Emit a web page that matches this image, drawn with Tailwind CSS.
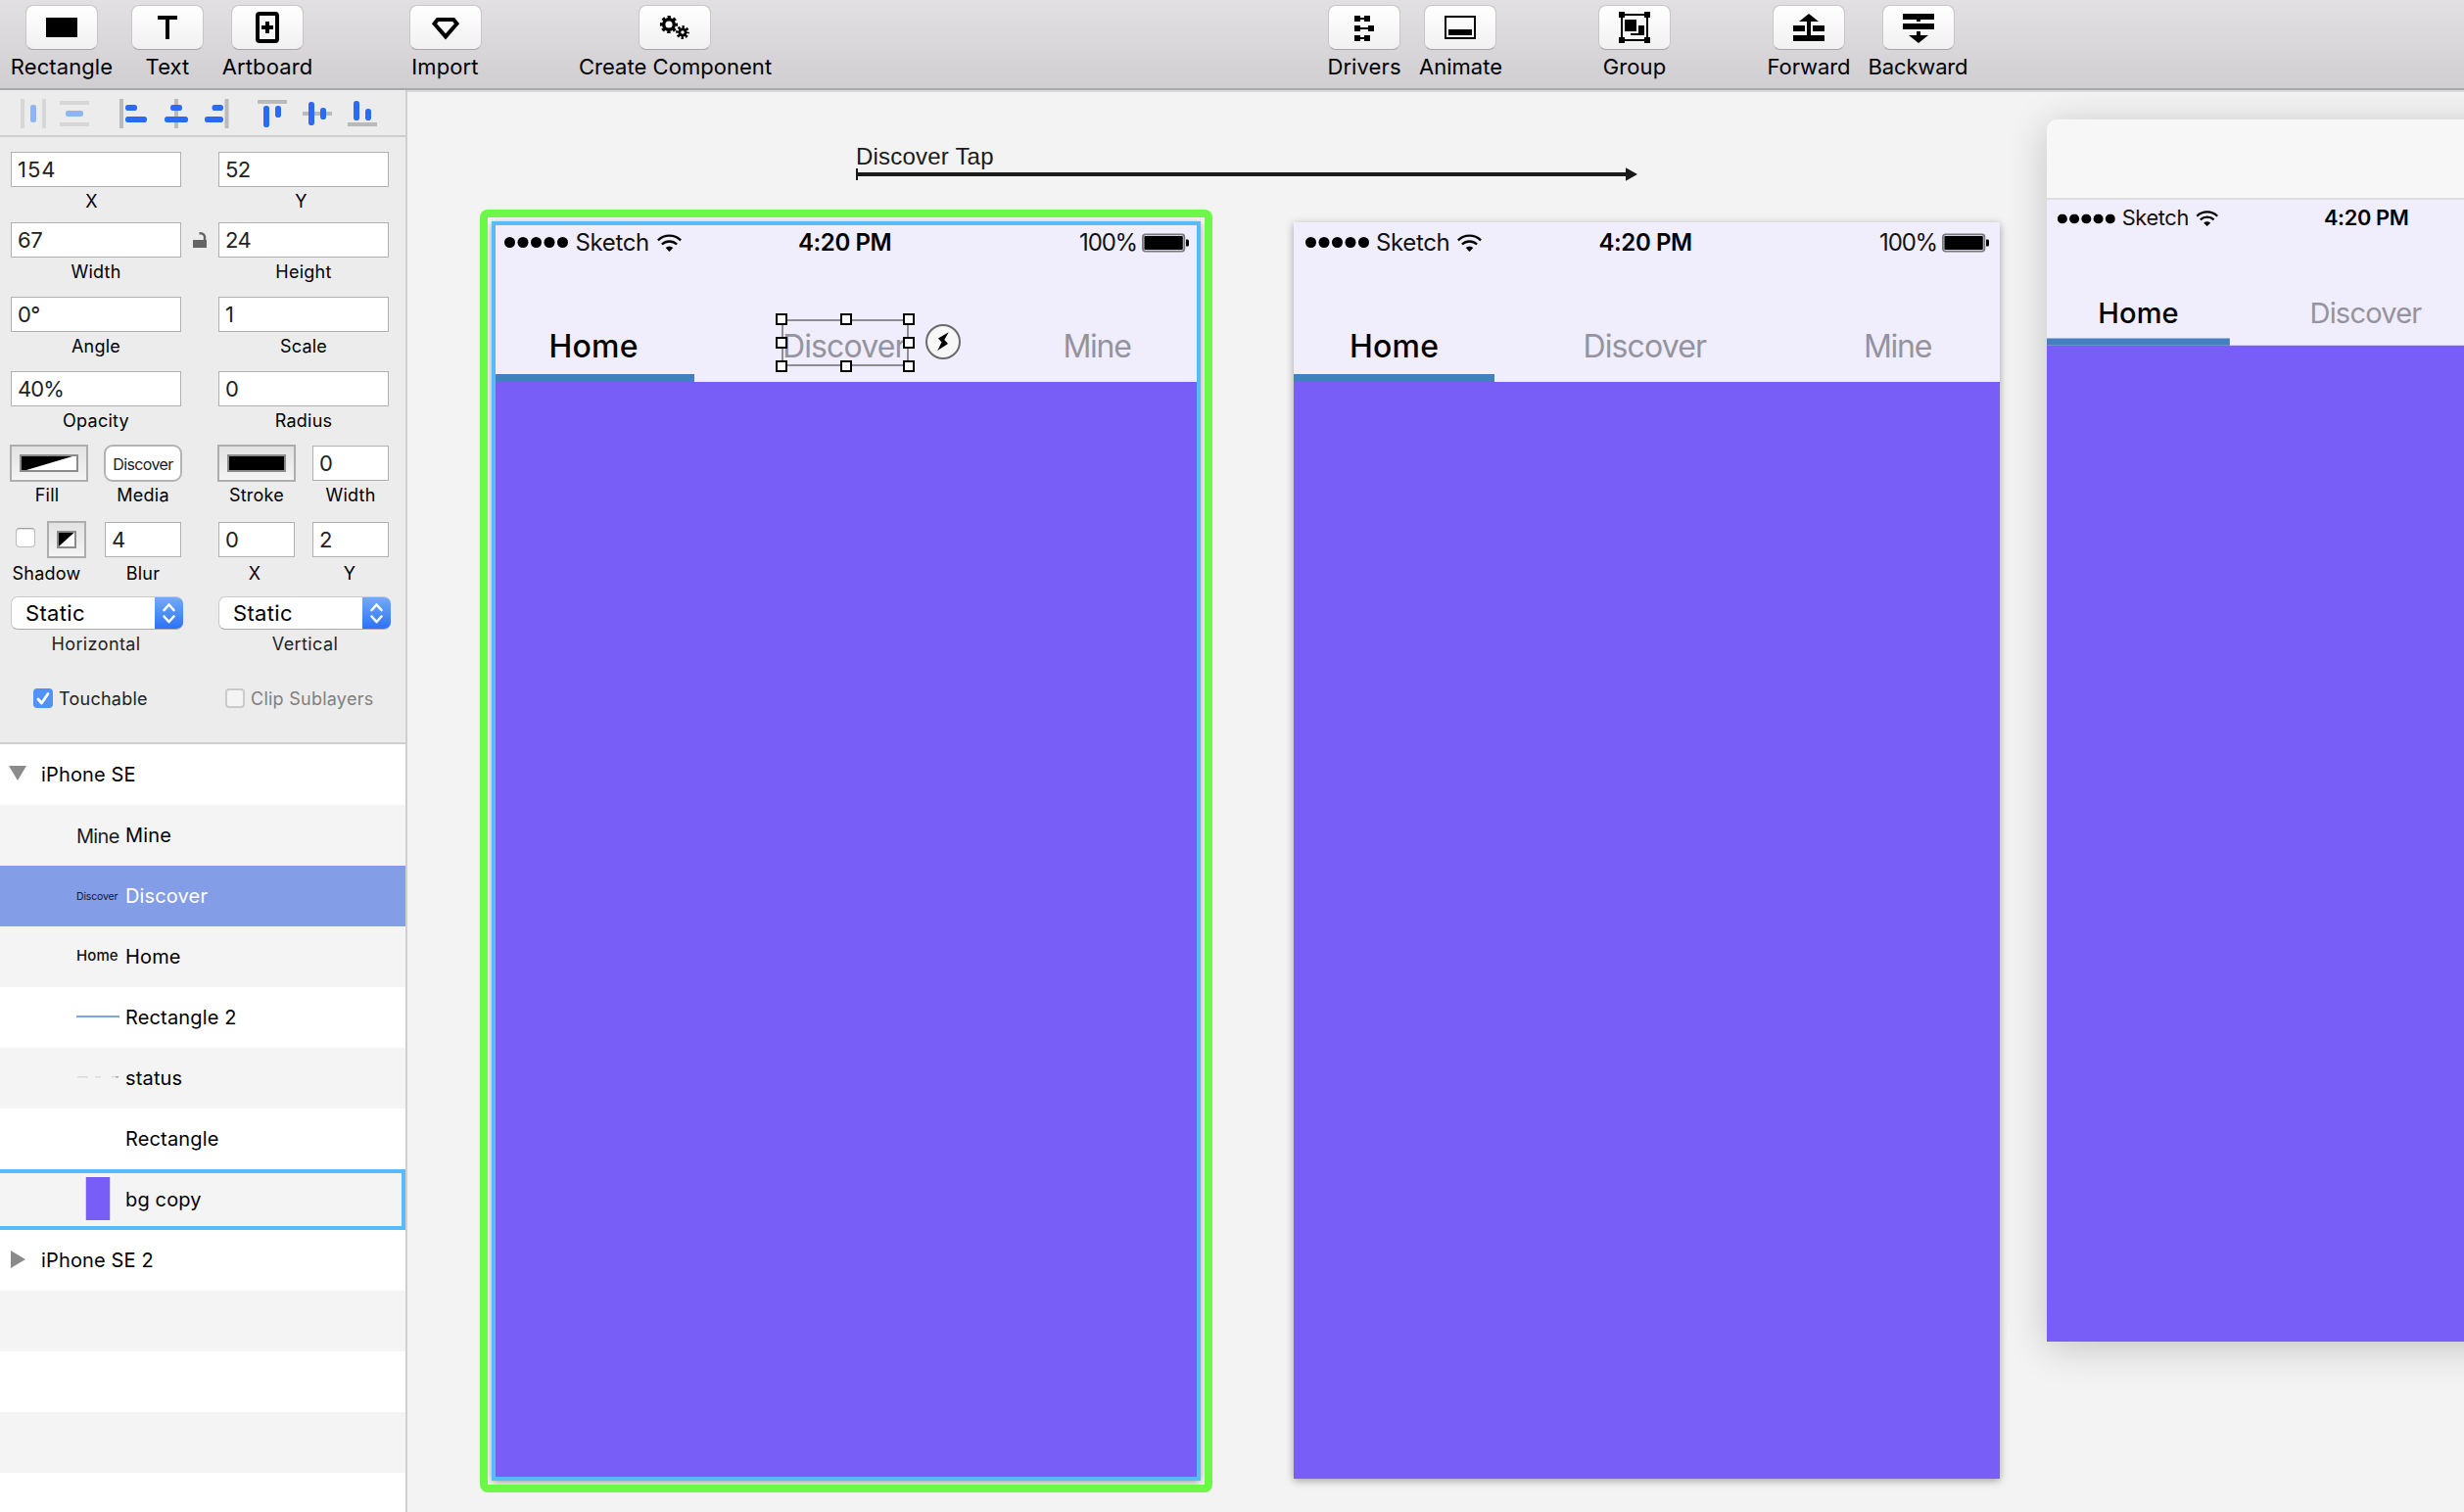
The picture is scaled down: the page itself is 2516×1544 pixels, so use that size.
<!DOCTYPE html>
<html lang="en">
<head>
<meta charset="utf-8">
<title>Design editor</title>
<script src="https://cdn.jsdelivr.net/npm/@tailwindcss/browser@4"></script>
</head>
<body class="w-[2516px] h-[1544px] overflow-hidden bg-[#f3f3f3] font-['Inter',sans-serif] text-black">

<!-- Toolbar -->
<header class="h-[92px] flex items-start pt-[5px] pl-[26px] bg-linear-to-b from-[#e2e0e3] to-[#d0ced1] border-b-2 border-[#a9a8aa] text-[22px] leading-7 tracking-[0.1px] whitespace-nowrap">
  <div class="w-[74px] flex flex-col items-center">
    <div class="w-[74px] h-[46px] rounded-lg border border-[#c6c5c7] border-b-[#a5a4a6] bg-linear-to-b from-white to-[#f1f1f1]"><svg class="-m-px w-[74px] h-[45px]" viewBox="26 5 74 45"><path d="M47 18h32v20H47z"/></svg></div>
    <span class="mt-[3px]">Rectangle</span>
  </div>
  <div class="ml-[34px] w-[74px] flex flex-col items-center">
    <div class="w-[74px] h-[46px] rounded-lg border border-[#c6c5c7] border-b-[#a5a4a6] bg-linear-to-b from-white to-[#f1f1f1]"><svg class="-m-px w-[74px] h-[45px]" viewBox="134 5 74 45"><path d="M161 16h20v4h-8v20h-4V20h-8z"/></svg></div>
    <span class="mt-[3px]">Text</span>
  </div>
  <div class="ml-[28px] w-[74px] flex flex-col items-center">
    <div class="w-[74px] h-[46px] rounded-lg border border-[#c6c5c7] border-b-[#a5a4a6] bg-linear-to-b from-white to-[#f1f1f1]"><svg class="-m-px w-[74px] h-[45px]" viewBox="236 5 74 45"><rect x="263" y="14" width="20" height="28" rx="2" fill="none" stroke="#000" stroke-width="4"/><path d="M271 22h4v4h4v4h-4v4h-4v-4h-4v-4h4z"/></svg></div>
    <span class="mt-[3px]">Artboard</span>
  </div>
  <div class="ml-[108px] w-[74px] flex flex-col items-center">
    <div class="w-[74px] h-[46px] rounded-lg border border-[#c6c5c7] border-b-[#a5a4a6] bg-linear-to-b from-white to-[#f1f1f1]"><svg class="-m-px w-[74px] h-[45px]" viewBox="418 5 74 45"><path d="M446.8 20h16.400l3.300 4.200L455 37.400 443.500 24.200z" fill="none" stroke="#000" stroke-width="4"/></svg></div>
    <span class="mt-[3px] pr-px">Import</span>
  </div>
  <div class="ml-[160px] w-[74px] flex flex-col items-center">
    <div class="w-[74px] h-[46px] rounded-lg border border-[#c6c5c7] border-b-[#a5a4a6] bg-linear-to-b from-white to-[#f1f1f1]"><svg class="-m-px w-[74px] h-[45px]" viewBox="652 5 74 45" fill="none" stroke="#000"><circle cx="683" cy="25" r="5.300" stroke-width="3.400"/><circle cx="683" cy="25" r="7.700" stroke-width="2.800" stroke-dasharray="3.300 2.747" stroke-dashoffset="1.650"/><circle cx="697" cy="33" r="3.200" stroke-width="2.800"/><circle cx="697" cy="33" r="5.400" stroke-width="3" stroke-dasharray="2.300 1.941" stroke-dashoffset="1.150"/></svg></div>
    <span class="mt-[3px] pl-px tracking-[0.040px]">Create Component</span>
  </div>
  <div class="ml-[630px] w-[74px] flex flex-col items-center">
    <div class="w-[74px] h-[46px] rounded-lg border border-[#c6c5c7] border-b-[#a5a4a6] bg-linear-to-b from-white to-[#f1f1f1]"><svg class="-m-px w-[74px] h-[45px]" viewBox="1356 5 74 45"><path d="M1383 16h6v2h4v-2h6v6h-6v-2h-4v2h-6zM1383 26h6v2h8v-2h6v6h-6v-2h-8v2h-6zM1383 36h6v2h4v-2h6v6h-6v-2h-4v2h-6z"/></svg></div>
    <span class="mt-[3px]">Drivers</span>
  </div>
  <div class="ml-[24px] w-[74px] flex flex-col items-center">
    <div class="w-[74px] h-[46px] rounded-lg border border-[#c6c5c7] border-b-[#a5a4a6] bg-linear-to-b from-white to-[#f1f1f1]"><svg class="-m-px w-[74px] h-[45px]" viewBox="1454 5 74 45"><path d="M1476 17h30v22h-30z" fill="none" stroke="#000" stroke-width="2"/><path d="M1479 30h24v6h-24z"/></svg></div>
    <span class="mt-[3px] pl-px tracking-[0px]">Animate</span>
  </div>
  <div class="ml-[104px] w-[74px] flex flex-col items-center">
    <div class="w-[74px] h-[46px] rounded-lg border border-[#c6c5c7] border-b-[#a5a4a6] bg-linear-to-b from-white to-[#f1f1f1]"><svg class="-m-px w-[74px] h-[45px]" viewBox="1632 5 74 45"><path d="M1656 15h26v26h-26z" fill="none" stroke="#000" stroke-width="2"/><path d="M1653 12h6v6h-6zM1679 12h6v6h-6zM1653 38h6v6h-6zM1679 38h6v6h-6zM1659 20h12v12h-12zM1673 26h6v10h-14v-2h8z"/></svg></div>
    <span class="mt-[3px]">Group</span>
  </div>
  <div class="ml-[104px] w-[74px] flex flex-col items-center">
    <div class="w-[74px] h-[46px] rounded-lg border border-[#c6c5c7] border-b-[#a5a4a6] bg-linear-to-b from-white to-[#f1f1f1]"><svg class="-m-px w-[74px] h-[45px]" viewBox="1810 5 74 45"><path d="M1847 14l10 8h-8v14h14v6h-32v-6h14V22h-8zM1831 26h12v6h-12zM1851 26h12v6h-12z"/></svg></div>
    <span class="mt-[3px] tracking-[-0.1px]">Forward</span>
  </div>
  <div class="ml-[38px] w-[74px] flex flex-col items-center">
    <div class="w-[74px] h-[46px] rounded-lg border border-[#c6c5c7] border-b-[#a5a4a6] bg-linear-to-b from-white to-[#f1f1f1]"><svg class="-m-px w-[74px] h-[45px]" viewBox="1922 5 74 45"><path d="M1943 14h32v6h-14v2h-4v-2h-14zM1943 24h32v6h-32zM1957 32h4v4h8l-10 8-10-8h8z"/></svg></div>
    <span class="mt-[3px] pr-px tracking-[-0.170px]">Backward</span>
  </div>
</header>

<div class="flex h-[1452px]">
  <!-- Sidebar -->
  <aside class="w-[416px] shrink-0 border-r-2 border-[#d0d0d0] bg-[#ececec]">
    <div class="h-[48px] border-b-2 border-[#cfcfcf]">
      <svg class="w-[414px] h-[46px]" viewBox="0 92 414 46">
        <path fill="#d7d7d7" d="M21 101h4v30h-4zM43 101h4v30h-4zM61 103h30v4H61zM61 125h30v4H61z"/>
        <g fill="#8db5f1"><rect x="31" y="107" width="6" height="18" rx="2.500"/><rect x="67" y="113" width="18" height="6" rx="2.500"/></g>
        <path fill="#bababa" d="M122 101h4v30h-4zM178 101h4v30h-4zM229.500 101h4v30h-4zM263 102h30v4h-30zM309 114h30v4h-30zM355 125h30v4h-30z"/>
        <g fill="#2a6af5">
          <rect x="128" y="107" width="12" height="6" rx="2.800"/><rect x="128" y="119" width="22" height="6" rx="2.800"/>
          <rect x="174" y="107" width="12" height="6" rx="2.800"/><rect x="168" y="119" width="24" height="6" rx="2.800"/>
          <rect x="216.500" y="107" width="11.500" height="6" rx="2.800"/><rect x="209" y="119" width="19" height="6" rx="2.800"/>
          <rect x="269" y="108" width="6" height="22" rx="2.800"/><rect x="281" y="108" width="6" height="12" rx="2.800"/>
          <rect x="315" y="104" width="6" height="24" rx="2.800"/><rect x="327" y="110" width="6" height="12" rx="2.800"/>
          <rect x="361" y="103" width="6" height="20" rx="2.800"/><rect x="373" y="111" width="6" height="12" rx="2.800"/>
        </g>
      </svg>
    </div>

    <div class="h-[620px] pt-[15px] pl-[11px] border-b-2 border-[#cfcfcf] text-[18px] leading-6 tracking-[0.25px] text-center whitespace-nowrap">
      <div class="h-[72px] flex gap-[38px]">
        <div class="w-[174px]"><div class="h-9 pl-1.5 border border-[#b0b0b0] bg-white text-left text-[22px] leading-[35px] text-[#222] tracking-[1px]">154</div><div class="mt-[3px] pr-[9px]">X</div></div>
        <div class="w-[174px]"><div class="h-9 pl-1.5 border border-[#b0b0b0] bg-white text-left text-[22px] leading-[35px] text-[#222] tracking-[-0.5px]">52</div><div class="mt-[3px] pr-[5px]">Y</div></div>
      </div>
      <div class="h-[76px] flex">
        <div class="w-[174px]"><div class="h-9 pl-1.5 border border-[#b0b0b0] bg-white text-left text-[22px] leading-[35px] text-[#222] tracking-[-0.5px]">67</div><div class="mt-[3px]">Width</div></div>
        <svg class="w-[38px] h-9" viewBox="185 227 38 36"><path d="M197 245h14v8h-14z" fill="#646464"/><path d="M203.500 238.300h1.500a4 4 0 0 1 4 4v3" fill="none" stroke="#646464" stroke-width="2.400"/></svg>
        <div class="w-[174px]"><div class="h-9 pl-1.5 border border-[#b0b0b0] bg-white text-left text-[22px] leading-[35px] text-[#222] tracking-[-0.5px]">24</div><div class="mt-[3px]">Height</div></div>
      </div>
      <div class="h-[76px] flex gap-[38px]">
        <div class="w-[174px]"><div class="h-9 pl-1.5 border border-[#b0b0b0] bg-white text-left text-[22px] leading-[35px] text-[#222] tracking-[-0.7px]">0°</div><div class="mt-[3px]">Angle</div></div>
        <div class="w-[174px]"><div class="h-9 pl-1.5 border border-[#b0b0b0] bg-white text-left text-[22px] leading-[35px] text-[#222]">1</div><div class="mt-[3px]">Scale</div></div>
      </div>
      <div class="h-[76px] flex gap-[38px]">
        <div class="w-[174px]"><div class="h-9 pl-1.5 border border-[#b0b0b0] bg-white text-left text-[22px] leading-[35px] text-[#222] tracking-[-0.9px]">40%</div><div class="mt-[3px]">Opacity</div></div>
        <div class="w-[174px]"><div class="h-9 pl-1.5 border border-[#b0b0b0] bg-white text-left text-[22px] leading-[35px] text-[#222]">0</div><div class="mt-[3px]">Radius</div></div>
      </div>
      <div class="h-[78px] flex">
        <div class="w-[78px]">
          <div class="-mx-px -mt-px w-20 h-[38px] border-2 border-[#adadad] bg-linear-to-b from-[#e2e2e2] to-[#f4f4f4] flex items-center justify-center"><svg class="w-[60px] h-[18px] border-2 border-[#8c8c8c] bg-white" viewBox="0 0 56 14"><path d="M0 0h52L5 14H0z"/></svg></div>
          <div class="mt-0.5 pr-1">Fill</div>
        </div>
        <div class="ml-[18px] w-[78px]">
          <div class="-mx-px -mt-px w-20 h-[38px] border-2 border-[#b3b3b3] rounded-[9px] bg-white text-[16px] leading-[37px] tracking-[-0.6px] text-[#1a1a1a]">Discover</div>
          <div class="mt-0.5">Media</div>
        </div>
        <div class="ml-[38px] w-[78px]">
          <div class="-mx-px -mt-px w-20 h-[38px] border-2 border-[#adadad] bg-linear-to-b from-[#e2e2e2] to-[#f4f4f4] flex items-center justify-center"><div class="w-[60px] h-[18px] border-2 border-[#8c8c8c] bg-black"></div></div>
          <div class="mt-0.5">Stroke</div>
        </div>
        <div class="ml-[18px] w-[78px]"><div class="h-9 pl-1.5 border border-[#b0b0b0] bg-white text-left text-[22px] leading-[35px] text-[#222]">0</div><div class="mt-[3px]">Width</div></div>
      </div>
      <div class="h-[76px] flex">
        <div class="w-[78px]">
          <div class="-mt-px h-[38px] flex pl-[5px]">
            <div class="mt-[7px] w-5 h-5 rounded-[4px] border border-[#bcbcbc] border-t-[#a0a0a0] bg-white shadow-[inset_0_1px_1px_rgba(0,0,0,0.15)]"></div>
            <div class="ml-3 w-10 h-[38px] border-2 border-[#adadad] bg-linear-to-b from-[#e2e2e2] to-[#f4f4f4] flex items-center justify-center"><svg class="w-5 h-[18px] border-2 border-[#8c8c8c] bg-white" viewBox="0 0 16 14"><path d="M0 0h15.500L0 14z"/></svg></div>
          </div>
          <div class="mt-1 pr-[5px]">Shadow</div>
        </div>
        <div class="ml-[18px] w-[78px]"><div class="h-9 pl-1.5 border border-[#b0b0b0] bg-white text-left text-[22px] leading-[35px] text-[#222]">4</div><div class="mt-[5px]">Blur</div></div>
        <div class="ml-[38px] w-[78px]"><div class="h-9 pl-1.5 border border-[#b0b0b0] bg-white text-left text-[22px] leading-[35px] text-[#222]">0</div><div class="mt-[5px] pr-1">X</div></div>
        <div class="ml-[18px] w-[78px]"><div class="h-9 pl-1.5 border border-[#b0b0b0] bg-white text-left text-[22px] leading-[35px] text-[#222]">2</div><div class="mt-[5px] pr-0.5">Y</div></div>
      </div>
      <div class="h-[94px] flex gap-9 text-[#222]">
        <div class="w-[176px]">
          <div class="h-[34px] flex justify-between rounded-[7px] overflow-hidden bg-white border border-[#c9c9c9] border-b-[#a9a9a9] border-r-0">
            <span class="pl-[14px] text-[22px] leading-[33px] tracking-[0.34px] text-black">Static</span>
            <svg class="-my-px w-[29px] h-[34px] bg-linear-to-b from-[#74acf5] to-[#2a6ff6]" viewBox="0 0 29 34" fill="none" stroke="#fff" stroke-width="2.600" stroke-linecap="round" stroke-linejoin="round"><path d="M9.500 14l5-5.500 5 5.500M9.500 20.500l5 5.500 5-5.500"/></svg>
          </div>
          <div class="mt-[3px] pr-0.5 tracking-[0.4px]">Horizontal</div>
        </div>
        <div class="w-[176px]">
          <div class="h-[34px] flex justify-between rounded-[7px] overflow-hidden bg-white border border-[#c9c9c9] border-b-[#a9a9a9] border-r-0">
            <span class="pl-[14px] text-[22px] leading-[33px] tracking-[0.34px] text-black">Static</span>
            <svg class="-my-px w-[29px] h-[34px] bg-linear-to-b from-[#74acf5] to-[#2a6ff6]" viewBox="0 0 29 34" fill="none" stroke="#fff" stroke-width="2.600" stroke-linecap="round" stroke-linejoin="round"><path d="M9.500 14l5-5.500 5 5.500M9.500 20.500l5 5.500 5-5.500"/></svg>
          </div>
          <div class="mt-[3px] pl-px tracking-[0.4px]">Vertical</div>
        </div>
      </div>
      <div class="h-5 flex items-center pl-[23px]">
        <svg class="w-5 h-5 rounded-[4px] bg-[#4f93f6]" viewBox="0 0 20 20" fill="none" stroke="#fff" stroke-width="2.800" stroke-linecap="round" stroke-linejoin="round"><path d="M5 11l3.500 4L15 5.500"/></svg>
        <span class="ml-1.5 mt-0.5 w-[170px] text-left text-[#222]">Touchable</span>
        <div class="w-5 h-5 rounded-[4px] border-2 border-[#cbcbcb] bg-[#f4f4f4]"></div>
        <span class="ml-1.5 mt-0.5 text-[#808080]">Clip Sublayers</span>
      </div>
    </div>

    <!-- Layer list -->
    <div class="h-[784px] overflow-hidden bg-white text-[20px] tracking-[0.15px]">
      <div class="h-[62px] flex items-center bg-white"><svg class="ml-[9px] mb-1 w-[18px] h-4" viewBox="0 0 18 16"><path fill="#8b8b8b" d="M0 1h18L9 16z"/></svg><span class="ml-[15px]">iPhone SE</span></div>
      <div class="h-[62px] flex items-center pl-[78px] bg-[#f4f4f4]"><span class="w-[44px] pt-0.5 text-[20px] tracking-[-0.7px] text-[#1c1c1c]">Mine</span><span class="ml-1.5">Mine</span></div>
      <div class="h-[62px] flex items-center pl-[78px] bg-[#849de7]"><span class="w-[44px] mt-px text-[10.500px] tracking-[-0.150px] text-[#101525]">Discover</span><span class="ml-1.5 text-white">Discover</span></div>
      <div class="h-[62px] flex items-center pl-[78px] bg-[#f4f4f4]"><span class="w-[44px] mb-0.5 text-[15px] font-medium tracking-[0.1px] text-[#111]">Home</span><span class="ml-1.5">Home</span></div>
      <div class="h-[62px] flex items-center pl-[78px] bg-white"><div class="w-[44px] h-0.5 -mt-0.5 bg-[#7ea4d8]"></div><span class="ml-1.5">Rectangle 2</span></div>
      <div class="h-[62px] flex items-center pl-[78px] bg-[#f4f4f4]"><svg class="w-[44px] h-0.5 -mt-0.5" viewBox="0 0 44 2"><path fill="#dcdcdc" d="M1 0h11v1.500H1zM19 0h6v1.500h-6zM36 0h4v1.500h-4z"/><path fill="#a8a8a8" d="M40 0h3v1.500h-3z"/></svg><span class="ml-1.5">status</span></div>
      <div class="h-[62px] flex items-center pl-[128px] bg-white"><span>Rectangle</span></div>
      <div class="h-[62px] flex items-center pl-[87px] bg-[#f4f4f4] border-y-4 border-r-4 border-[#56bbf8]"><div class="w-[26px] h-11 mb-0.5 border-x border-[#d5cff5] bg-[#785df6]"></div><span class="ml-[15px]">bg copy</span></div>
      <div class="h-[62px] flex items-center bg-white"><svg class="ml-[11px] mb-0.5 w-[15px] h-[18px]" viewBox="0 0 15 18"><path fill="#8b8b8b" d="M0 0l15 9L0 18z"/></svg><span class="ml-4">iPhone SE 2</span></div>
      <div class="h-[62px] bg-[#f4f4f4]"></div>
      <div class="h-[62px] bg-white"></div>
      <div class="h-[62px] bg-[#f4f4f4]"></div>
    </div>
  </aside>

  <!-- Canvas -->
  <main class="relative flex-1 overflow-hidden border-t-2 border-[#d8d8d8] bg-[#f3f3f3]">
    <div class="absolute left-[458px] top-[50px] text-[24px] leading-8 font-['Liberation_Sans',sans-serif] tracking-[0.2px] text-[#1a1a1a]">Discover Tap</div>
    <svg class="absolute left-[458px] top-[76px] w-[800px] h-4" viewBox="874 170 800 16"><path fill="#1a1a1a" d="M874 172h2v4h784v-4.800l12 6.800-12 6.800V180H876v4h-2z"/></svg>

    <!-- Active artboard -->
    <div class="absolute left-[74px] top-[120px] w-[748px] h-[1310px] rounded-[8px] bg-[#6cf846]"></div>
    <div class="absolute left-[82px] top-[128px] w-[732px] h-[1294px] bg-[#f3f3f3] overflow-hidden">
      <div class="absolute left-[5px] top-[4.500px] w-[722px] h-[1284px] shadow-[0_2px_8px_rgba(0,0,0,0.4)]" data-screen></div>
      <div class="absolute left-[4px] top-[4px] w-[724px] h-[1286px] border-4 border-[#56bbf8]"></div>
    </div>
    <svg class="absolute left-[374px] top-[224px] w-[196px] h-[64px]" viewBox="790 318 196 64">
      <path d="M799 327h128v46H799z" fill="none" stroke="#8f8f93" stroke-width="2"/>
      <g fill="#fff" stroke="#000" stroke-width="2">
        <path d="M793 321h10v10h-10zM859 321h10v10h-10zM923 321h10v10h-10zM793 345h10v10h-10zM923 345h10v10h-10zM793 369h10v10h-10zM859 369h10v10h-10zM923 369h10v10h-10z"/>
      </g>
      <circle cx="963" cy="349" r="17" fill="#f7f7f7" stroke="#6b6b6b" stroke-width="2"/>
      <path d="M968.700 339.300L958 345.500l3.500 4L957.300 358l10.700-7-3.700-4z"/>
    </svg>

    <!-- Second artboard -->
    <div class="absolute left-[904.500px] top-[132.500px] w-[721.500px] h-[1283.500px] shadow-[0_2px_8px_rgba(0,0,0,0.35)]" data-screen></div>

    <!-- Preview window -->
    <div class="absolute left-[1674px] top-[28px] w-[655px] h-[1248px] rounded-t-[10px] overflow-hidden bg-[#f7f7f7] [&_[data-trailing]]:invisible">
      <div class="h-[82px] border-b-2 border-[#dedede]"></div>
      <div class="w-[722px] h-[1290px] origin-top-left scale-[0.907]" data-screen></div>
    </div>
    <div class="absolute left-[1674px] top-[28px] w-[655px] h-[1248px] rounded-t-[10px] shadow-[0_6px_40px_rgba(0,0,0,0.2)]"></div>
  </main>
</div>

<!-- Phone screen shared by both artboards and the preview -->
<template id="screen">
  <div class="h-full flex flex-col bg-[#785df6] whitespace-nowrap">
    <div class="h-[163.500px] shrink-0 bg-[#f0eefd]">
      <div class="h-[38px] grid grid-cols-[304px_auto_1fr] items-center pl-3 pr-[10px] pt-0.5 text-[24px] leading-[38px]">
        <div class="flex items-center">
          <svg class="w-[65px] h-[11px]" viewBox="0 0 65 11"><circle cx="5.500" cy="5.500" r="5.500"/><circle cx="19" cy="5.500" r="5.500"/><circle cx="32.500" cy="5.500" r="5.500"/><circle cx="46" cy="5.500" r="5.500"/><circle cx="59.500" cy="5.500" r="5.500"/></svg>
          <span class="ml-[7.500px] tracking-[-0.370px] text-[#111]">Sketch</span>
          <svg class="ml-2 w-[25px] h-[18px]" viewBox="0 0 25 18" fill="none" stroke="#000" stroke-width="2.400"><path d="M.9 6.400a16.600 16.600 0 0 1 23.200 0M4.900 10.500a11 11 0 0 1 15.200 0"/><path d="M8.700 14.100a5.500 5.500 0 0 1 7.600 0L12.500 17.900z" fill="#000" stroke="none"/></svg>
        </div>
        <span class="-ml-1 font-semibold tracking-[-0.400px]">4:20 PM</span>
        <div class="flex items-center justify-end" data-trailing>
          <span class="tracking-[-1.180px] text-[#111]">100%</span>
          <svg class="ml-[5px] w-[49px] h-5" viewBox="0 0 49 20"><rect x=".9" y="1.400" width="42.400" height="17.200" rx="2.500" fill="none" stroke="#77777c" stroke-width="1.800"/><rect x="2.400" y="3" width="39.400" height="14" rx="1"/><path d="M45 6.500h1.500a1.500 1.500 0 0 1 1.500 1.500v4a1.500 1.500 0 0 1-1.500 1.500H45z"/></svg>
        </div>
      </div>
      <div class="mt-[66.500px] h-[45px] grid grid-cols-[238.500px_286.500px_auto] pl-[57.500px] text-[32px] leading-[46px] text-[#95939d]">
        <span class="font-[450] tracking-[0.2px] text-black">Home</span>
        <span class="tracking-[-0.870px]">Discover</span>
        <span class="tracking-[-1.300px]" data-trailing>Mine</span>
      </div>
      <div class="mt-[6px] w-[205.500px] h-2 bg-[#447fc2]"></div>
    </div>
  </div>
</template>
<script>
  const screenTemplate = document.getElementById('screen');
  document.querySelectorAll('[data-screen]').forEach(el => el.append(screenTemplate.content.cloneNode(true)));
</script>
</body>
</html>
